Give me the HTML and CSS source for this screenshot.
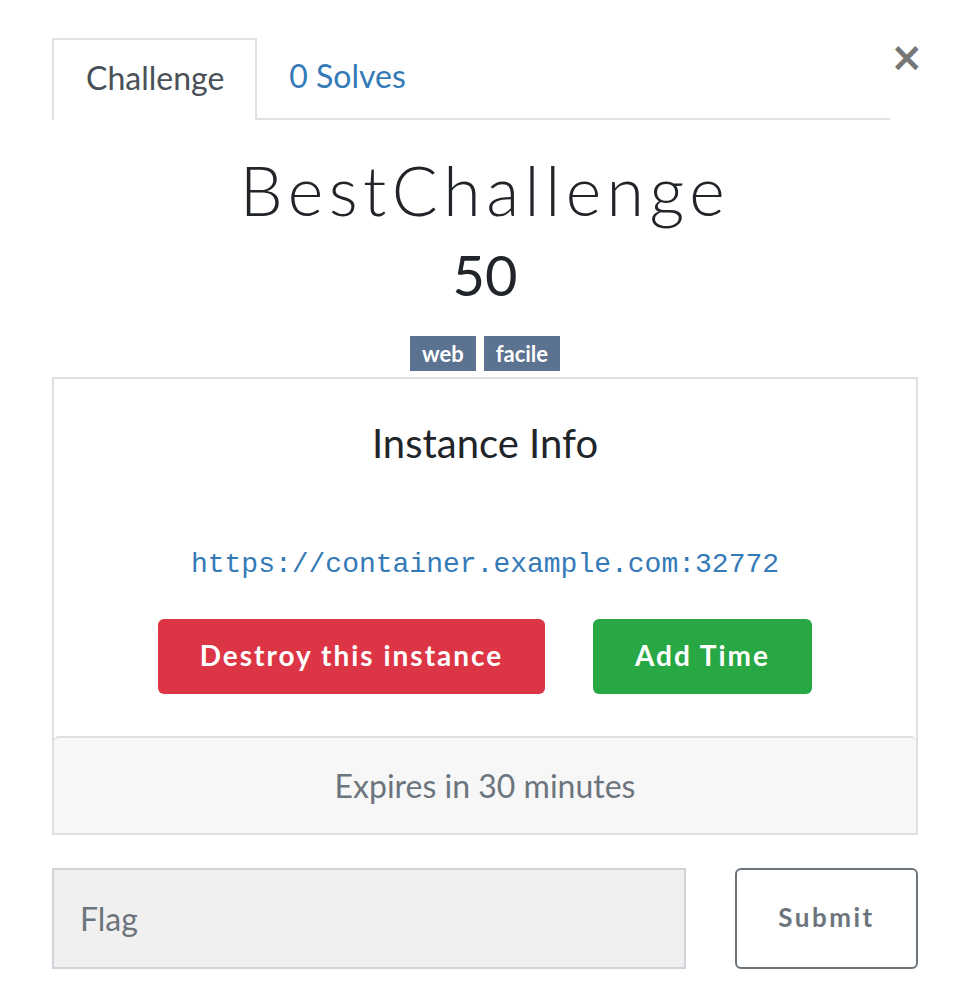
FILE: index.html
```html
<!DOCTYPE html>
<html>
<head>
<meta charset="utf-8">
<link rel="stylesheet" href="styles.css">
</head>
<body>
<div class="modal">
  <div class="head">
    <ul class="tabs">
      <li class="tab active">Challenge</li>
      <li class="tab link">0 Solves</li>
    </ul>
    <div class="close">&times;</div>
  </div>
  <h1 class="title">BestChallenge</h1>
  <div class="value">50</div>
  <div class="tags">
    <span class="badge">web</span>
    <span class="badge">facile</span>
  </div>
  <div class="card">
    <div class="card-body">
      <div class="card-title">Instance Info</div>
      <div class="url">https://container.example.com:32772</div>
      <div class="actions">
        <button class="btn btn-red">Destroy this instance</button>
        <button class="btn btn-green">Add Time</button>
      </div>
    </div>
    <div class="card-footer">Expires in 30 minutes</div>
  </div>
  <div class="submit-row">
    <div class="flag">Flag</div>
    <button class="submit">Submit</button>
  </div>
</div>
</body>
</html>
```
FILE: styles.css
```css
html, body { margin: 0; padding: 0; background: #fff; }
body { font-family: "Lato", "Liberation Sans", sans-serif; color: #212529; }
.modal { width: 866px; margin-left: 52px; padding-top: 38px; }
.head { display: flex; align-items: flex-start; }
.tabs { list-style: none; margin: 0; padding: 0; display: flex; flex: 0 0 838px; border-bottom: 2px solid #dee2e6; }
.tab { height: 80px; box-sizing: border-box; padding: 0 34px 6px 32px; display: flex; align-items: center; font-size: 32px; }
.tab.active { border: 2px solid #dee2e6; border-bottom: none; color: #495057; margin-bottom: -2px; height: 82px; background: #fff; padding-left: 32px; padding-right: 31px; }
.tab.link { color: #337ab7; }
.close { flex: 1; text-align: right; font-size: 40px; font-weight: bold; color: #777; line-height: 40px; margin-top: -1px; font-family: "DejaVu Sans", sans-serif; }
.title { margin: 30px 0 0; text-align: center; font-family: "Lato", sans-serif; font-weight: 300; font-size: 68px; letter-spacing: 5.5px; line-height: 80px; color: #212529; }
.value { text-align: center; font-size: 56px; line-height: 64px; margin-top: 13px; }
.tags { display: flex; justify-content: center; gap: 8px; margin-top: 29px; }
.badge { background: #5b7290; color: #fff; font-weight: bold; font-size: 22px; height: 35px; line-height: 35px; padding: 0 12px; }
.card { margin-top: 6px; border: 2px solid #dfdfdf; }
.card-body { padding: 40px 0 42px; text-align: center; }
.card-title { font-size: 40px; line-height: 48px; }
.url { margin-top: 80px; font-family: "Liberation Mono", monospace; font-size: 28px; color: #337ab7; line-height: 36px; }
.actions { display: flex; justify-content: center; gap: 48px; margin-top: 36px; }
.btn { border: none; border-radius: 6px; height: 75px; color: #fff; font-family: "Lato", sans-serif; font-weight: bold; font-size: 28px; letter-spacing: 2px; padding: 0 0 4px; }
.btn-red { background: #dc3545; width: 387px; }
.btn-green { background: #28a745; width: 219px; }
.card-footer { background: #f7f7f7; border-top: 2px solid #dfdfdf; border-radius: 5px 5px 0 0; height: 95px; display: flex; align-items: center; justify-content: center; font-size: 32px; color: #6c757d; }
.submit-row { display: flex; justify-content: space-between; margin-top: 33px; }
.flag { width: 634px; height: 101px; box-sizing: border-box; background: #f0f0f0; border: 2px solid #ced4da; display: flex; align-items: center; padding-left: 26px; font-size: 32px; color: #6c757d; }
.submit { width: 183px; height: 101px; box-sizing: border-box; background: #fff; border: 2px solid #6c757d; border-radius: 6px; font-family: "Lato", sans-serif; font-weight: bold; font-size: 26px; letter-spacing: 2.5px; color: #6c757d; padding-bottom: 4px; }
```
